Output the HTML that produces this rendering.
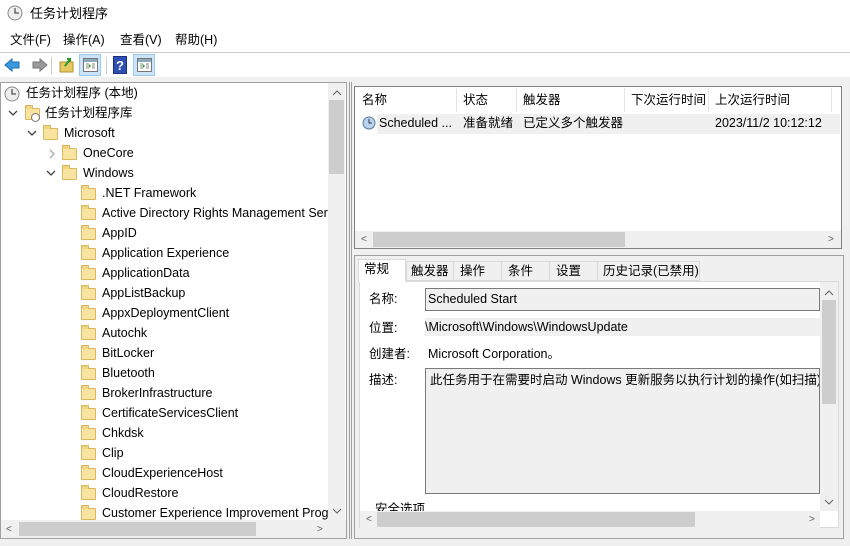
<!DOCTYPE html>
<html><head><meta charset="utf-8"><style>
*{margin:0;padding:0;box-sizing:border-box}
body{width:850px;height:546px;overflow:hidden;background:#f0f0f0;font-family:"Liberation Sans","Noto Sans CJK SC",sans-serif;font-size:12.5px;line-height:15px;color:#000;position:relative}
.a{position:absolute;white-space:nowrap}
.folder{position:absolute;width:15px;height:12px;background:#f8e4a0;border:1px solid #d9b860;border-radius:1px}
.folder:before{content:"";position:absolute;left:-1px;top:-4px;width:6px;height:3px;background:#f0d47f;border:1px solid #d9b860;border-bottom:none}
.chev{position:absolute}
.sb{position:absolute;background:#f0f0f0}
.thumb{position:absolute;background:#cdcdcd}
.arr{position:absolute;font-size:10px;color:#606060}
</style></head><body>
<div class="a" style="left:0;top:0;width:850px;height:29px;background:#fff"></div>
<svg class="a" style="left:7px;top:5px" width="16" height="16"><circle cx="8" cy="8" r="7" fill="#eee" stroke="#888"/><path d="M8 3v5h4" stroke="#555" fill="none" stroke-width="1.3"/></svg>
<div class="a" style="left:30px;top:6px;font-size:13px">任务计划程序</div>
<div class="a" style="left:0;top:29px;width:850px;height:23px;background:#fff"></div>
<div class="a" style="left:10px;top:33px">文件(F)</div>
<div class="a" style="left:63px;top:33px">操作(A)</div>
<div class="a" style="left:120px;top:33px">查看(V)</div>
<div class="a" style="left:175px;top:33px">帮助(H)</div>
<div class="a" style="left:0;top:52px;width:850px;height:1px;background:#ccc"></div>
<div class="a" style="left:0;top:53px;width:850px;height:24px;background:#fff"></div>
<svg class="a" style="left:4px;top:57px" width="44" height="16"><path d="M1 8 L8 2 V5 H15 V11 H8 V14Z" fill="#3a9ae0" stroke="#1f6fb5"/><path d="M43 8 L36 2 V5 H29 V11 H36 V14Z" fill="#9a9a9a" stroke="#777"/></svg>
<div class="a" style="left:51px;top:57px;width:1px;height:17px;background:#ccc"></div>
<svg class="a" style="left:59px;top:57px" width="16" height="16"><rect x="1" y="5" width="13" height="10" fill="#e8c860" stroke="#b59030"/><path d="M6 9 L11 2 M8 2h3v3" stroke="#2a9a2a" stroke-width="2" fill="none"/></svg>
<div class="a" style="left:79px;top:54px;width:22px;height:22px;background:#cce4f7;border:1px solid #99c9ef"></div>
<svg class="a" style="left:83px;top:58px" width="15" height="14"><rect x=".5" y=".5" width="14" height="13" fill="#fff" stroke="#777"/><rect x="1" y="1" width="13" height="3" fill="#8ab"/><path d="M3 6h3M3 8h3M3 10h3M9 6h3M9 8h3M9 10h3" stroke="#888"/><path d="M8 8l-2-2v4z" fill="#2a2"/></svg>
<div class="a" style="left:106px;top:57px;width:1px;height:17px;background:#ccc"></div>
<svg class="a" style="left:113px;top:56px" width="14" height="18"><rect x=".5" y=".5" width="13" height="17" fill="#2f4fb5" stroke="#1a2f80"/><text x="3" y="14" fill="#fff" font-size="13" font-weight="bold" font-family="Liberation Sans">?</text></svg>
<div class="a" style="left:133px;top:54px;width:22px;height:22px;background:#cce4f7;border:1px solid #99c9ef"></div>
<svg class="a" style="left:137px;top:58px" width="15" height="14"><rect x=".5" y=".5" width="14" height="13" fill="#fff" stroke="#777"/><rect x="1" y="1" width="13" height="3" fill="#8ab"/><path d="M3 6h3M3 8h3M3 10h3M9 6h3M9 8h3M9 10h3" stroke="#888"/><path d="M6 6l2 2-2 2z" fill="#2a2"/></svg>
<!-- left pane -->
<div class="a" style="left:0;top:82px;width:347px;height:457px;background:#fff;border:1px solid #a0a0a0"></div>
<svg class="a" style="left:4px;top:86px" width="16" height="16"><circle cx="8" cy="8" r="7" fill="#eee" stroke="#888"/><path d="M8 3v5h4" stroke="#555" fill="none" stroke-width="1.3"/></svg>
<div class="a" style="left:26px;top:86px">任务计划程序 (本地)</div>
<svg class="chev" style="left:8px;top:109px" width="10" height="8"><path d="M1 2l4 4 4-4" stroke="#444" fill="none" stroke-width="1.3"/></svg>
<div class="folder" style="left:25px;top:108px"></div>
<svg class="a" style="left:31px;top:113px" width="9" height="9"><circle cx="4.5" cy="4.5" r="4" fill="#fff" stroke="#777"/></svg>
<div class="a" style="left:45px;top:106px">任务计划程序库</div>
<svg class="chev" style="left:27px;top:129px" width="10" height="8"><path d="M1 2l4 4 4-4" stroke="#444" fill="none" stroke-width="1.3"/></svg>
<div class="folder" style="left:43px;top:128px"></div>
<div class="a" style="left:64px;top:126px">Microsoft</div>
<svg class="chev" style="left:48px;top:149px" width="8" height="10"><path d="M2 1l4 4-4 4" stroke="#aaa" fill="none" stroke-width="1.3"/></svg>
<div class="folder" style="left:62px;top:148px"></div>
<div class="a" style="left:83px;top:146px">OneCore</div>
<svg class="chev" style="left:46px;top:169px" width="10" height="8"><path d="M1 2l4 4 4-4" stroke="#444" fill="none" stroke-width="1.3"/></svg>
<div class="folder" style="left:62px;top:168px"></div>
<div class="a" style="left:83px;top:166px">Windows</div>
<div class="a" style="left:1px;top:83px;width:327px;height:437px;overflow:hidden">
<div class="folder" style="left:80px;top:105px"></div><div class="a" style="left:101px;top:103px">.NET Framework</div>
<div class="folder" style="left:80px;top:125px"></div><div class="a" style="left:101px;top:123px">Active Directory Rights Management Services</div>
<div class="folder" style="left:80px;top:145px"></div><div class="a" style="left:101px;top:143px">AppID</div>
<div class="folder" style="left:80px;top:165px"></div><div class="a" style="left:101px;top:163px">Application Experience</div>
<div class="folder" style="left:80px;top:185px"></div><div class="a" style="left:101px;top:183px">ApplicationData</div>
<div class="folder" style="left:80px;top:205px"></div><div class="a" style="left:101px;top:203px">AppListBackup</div>
<div class="folder" style="left:80px;top:225px"></div><div class="a" style="left:101px;top:223px">AppxDeploymentClient</div>
<div class="folder" style="left:80px;top:245px"></div><div class="a" style="left:101px;top:243px">Autochk</div>
<div class="folder" style="left:80px;top:265px"></div><div class="a" style="left:101px;top:263px">BitLocker</div>
<div class="folder" style="left:80px;top:285px"></div><div class="a" style="left:101px;top:283px">Bluetooth</div>
<div class="folder" style="left:80px;top:305px"></div><div class="a" style="left:101px;top:303px">BrokerInfrastructure</div>
<div class="folder" style="left:80px;top:325px"></div><div class="a" style="left:101px;top:323px">CertificateServicesClient</div>
<div class="folder" style="left:80px;top:345px"></div><div class="a" style="left:101px;top:343px">Chkdsk</div>
<div class="folder" style="left:80px;top:365px"></div><div class="a" style="left:101px;top:363px">Clip</div>
<div class="folder" style="left:80px;top:385px"></div><div class="a" style="left:101px;top:383px">CloudExperienceHost</div>
<div class="folder" style="left:80px;top:405px"></div><div class="a" style="left:101px;top:403px">CloudRestore</div>
<div class="folder" style="left:80px;top:425px"></div><div class="a" style="left:101px;top:423px">Customer Experience Improvement Program</div>
</div>
<div class="sb" style="left:328px;top:83px;width:17px;height:437px"></div>
<div class="thumb" style="left:329px;top:100px;width:15px;height:74px"></div>
<svg class="a" style="left:332px;top:90px" width="10" height="7"><path d="M1 5l4-4 4 4" stroke="#606060" fill="none"/></svg>
<svg class="a" style="left:332px;top:508px" width="10" height="7"><path d="M1 1l4 4 4-4" stroke="#606060" fill="none"/></svg>
<div class="sb" style="left:1px;top:520px;width:345px;height:18px"></div>
<div class="thumb" style="left:19px;top:522px;width:237px;height:14px"></div>
<div class="arr" style="left:6px;top:522px">&lt;</div>
<div class="arr" style="left:317px;top:522px">&gt;</div>
<div class="a" style="left:349px;top:82px;width:3px;height:457px;border-left:1px solid #a0a0a0;border-right:1px solid #a0a0a0"></div>
<!-- right top -->
<div class="a" style="left:354px;top:86px;width:488px;height:163px;background:#fff;border:1px solid #828282"></div>
<div class="a" style="left:362px;top:93px">名称</div>
<div class="a" style="left:456px;top:88px;width:1px;height:24px;background:#e5e5e5"></div>
<div class="a" style="left:463px;top:93px">状态</div>
<div class="a" style="left:516px;top:88px;width:1px;height:24px;background:#e5e5e5"></div>
<div class="a" style="left:523px;top:93px">触发器</div>
<div class="a" style="left:624px;top:88px;width:1px;height:24px;background:#e5e5e5"></div>
<div class="a" style="left:631px;top:93px">下次运行时间</div>
<div class="a" style="left:708px;top:88px;width:1px;height:24px;background:#e5e5e5"></div>
<div class="a" style="left:715px;top:93px">上次运行时间</div>
<div class="a" style="left:831px;top:88px;width:1px;height:24px;background:#e5e5e5"></div>
<div class="a" style="left:377px;top:114px;width:463px;height:20px;background:#f0f0f0"></div>
<svg class="a" style="left:362px;top:116px" width="14" height="14"><circle cx="7" cy="7" r="6" fill="#b8d4ee" stroke="#5a7aa0"/><path d="M7 3v4h3" stroke="#335" fill="none"/></svg>
<div class="a" style="left:379px;top:116px">Scheduled ...</div>
<div class="a" style="left:463px;top:116px">准备就绪</div>
<div class="a" style="left:523px;top:116px">已定义多个触发器</div>
<div class="a" style="left:715px;top:116px">2023/11/2 10:12:12</div>
<div class="sb" style="left:355px;top:231px;width:486px;height:17px"></div>
<div class="thumb" style="left:373px;top:232px;width:252px;height:15px"></div>
<div class="arr" style="left:361px;top:232px">&lt;</div>
<div class="arr" style="left:828px;top:232px">&gt;</div>
<!-- right bottom -->
<div class="a" style="left:354px;top:255px;width:490px;height:284px;border:1px solid #a0a0a0"></div>
<div class="a" style="left:406px;top:261px;width:294px;height:20px;border:1px solid #d9d9d9;background:#f0f0f0"></div>
<div class="a" style="left:358px;top:259px;width:48px;height:23px;background:#fff;border:1px solid #d9d9d9;border-bottom:none;z-index:2"></div>
<div class="a" style="left:364px;top:262px;z-index:3">常规</div>
<div class="a" style="left:453px;top:261px;width:1px;height:20px;background:#d9d9d9"></div>
<div class="a" style="left:501px;top:261px;width:1px;height:20px;background:#d9d9d9"></div>
<div class="a" style="left:549px;top:261px;width:1px;height:20px;background:#d9d9d9"></div>
<div class="a" style="left:597px;top:261px;width:1px;height:20px;background:#d9d9d9"></div>
<div class="a" style="left:411px;top:264px">触发器</div>
<div class="a" style="left:460px;top:264px">操作</div>
<div class="a" style="left:508px;top:264px">条件</div>
<div class="a" style="left:556px;top:264px">设置</div>
<div class="a" style="left:603px;top:264px">历史记录(已禁用)</div>
<div class="a" style="left:359px;top:281px;width:480px;height:247px;background:#fff;border:1px solid #d9d9d9"></div>
<div class="a" style="left:369px;top:292px">名称:</div>
<div class="a" style="left:425px;top:288px;width:395px;height:23px;background:#f0f0f0;border:1px solid #7a7a7a"></div>
<div class="a" style="left:428px;top:292px">Scheduled Start</div>
<div class="a" style="left:369px;top:321px">位置:</div>
<div class="a" style="left:425px;top:318px;width:395px;height:18px;background:#f0f0f0"></div>
<div class="a" style="left:425px;top:320px">\Microsoft\Windows\WindowsUpdate</div>
<div class="a" style="left:369px;top:347px">创建者:</div>
<div class="a" style="left:428px;top:347px">Microsoft Corporation。</div>
<div class="a" style="left:369px;top:373px">描述:</div>
<div class="a" style="left:425px;top:368px;width:395px;height:126px;background:#f0f0f0;border:1px solid #7a7a7a;overflow:hidden"><div class="a" style="left:4px;top:4px">此任务用于在需要时启动 Windows 更新服务以执行计划的操作(如扫描)。</div></div>
<div class="a" style="left:375px;top:502px;height:9px;overflow:hidden">安全选项</div>
<div class="sb" style="left:820px;top:282px;width:18px;height:229px"></div>
<div class="thumb" style="left:822px;top:300px;width:14px;height:104px"></div>
<svg class="a" style="left:824px;top:290px" width="10" height="7"><path d="M1 5l4-4 4 4" stroke="#606060" fill="none"/></svg>
<svg class="a" style="left:824px;top:499px" width="10" height="7"><path d="M1 1l4 4 4-4" stroke="#606060" fill="none"/></svg>
<div class="sb" style="left:360px;top:511px;width:460px;height:17px"></div>
<div class="thumb" style="left:377px;top:512px;width:318px;height:15px"></div>
<div class="arr" style="left:366px;top:512px">&lt;</div>
<div class="arr" style="left:809px;top:512px">&gt;</div>
</body></html>
